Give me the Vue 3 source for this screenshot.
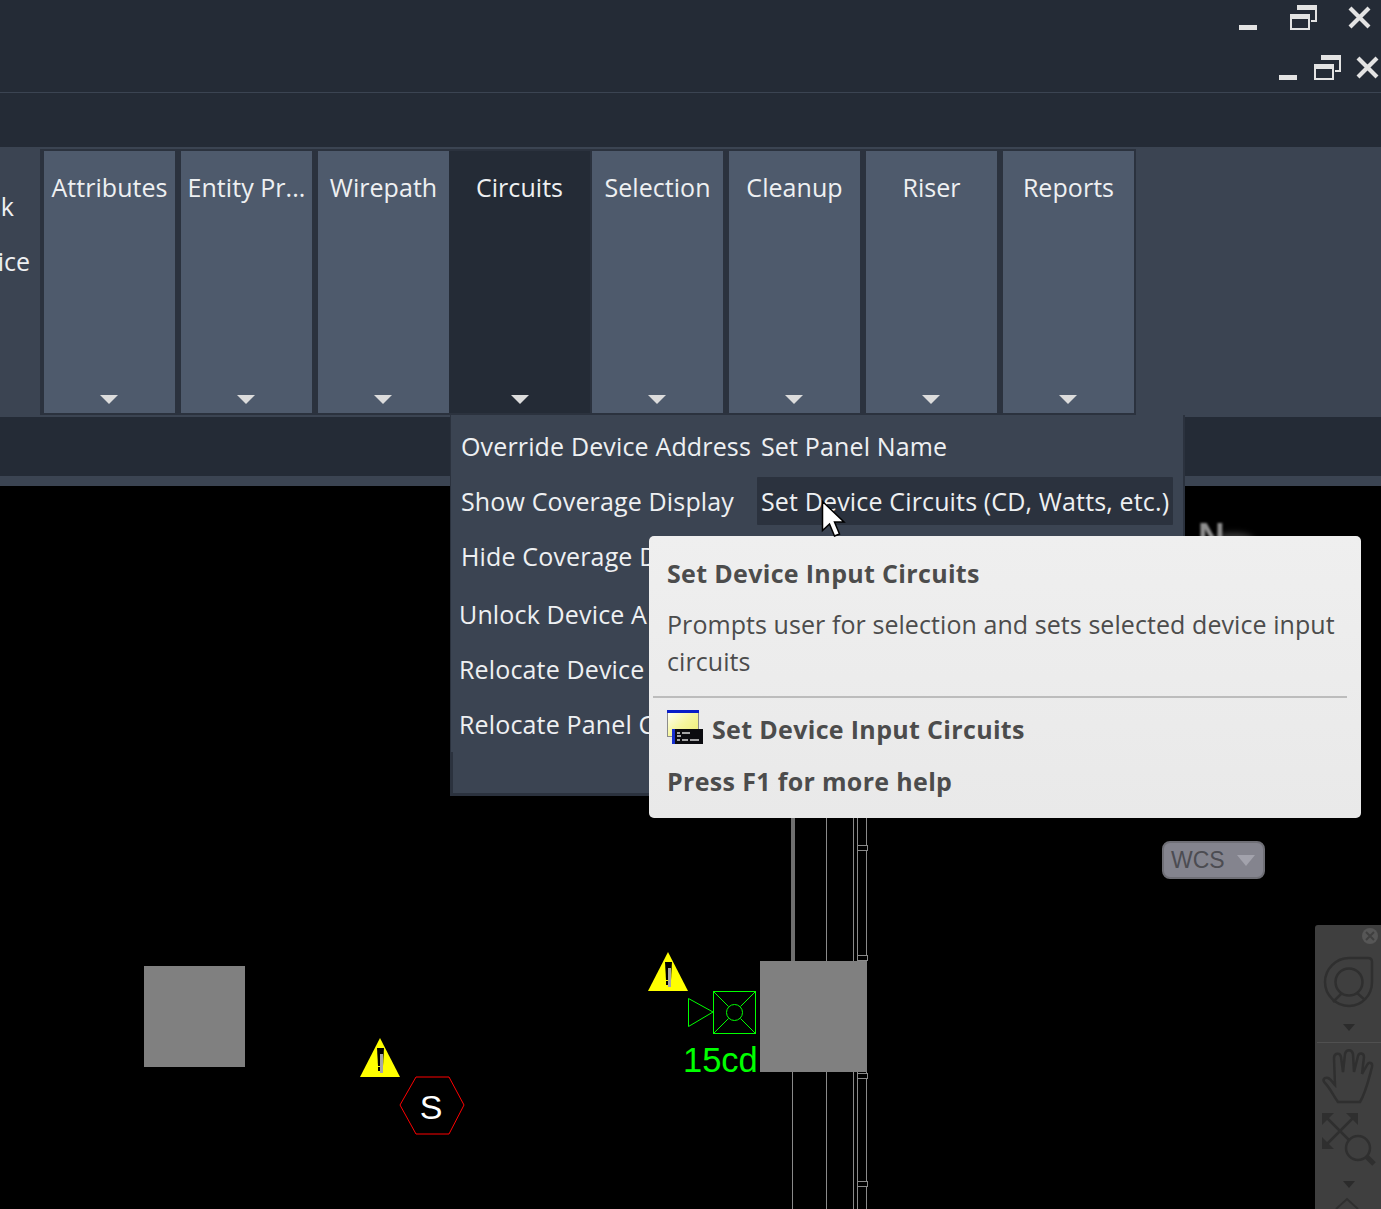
<script setup>
const panels = [
  { label: 'Attributes' },
  { label: 'Entity Pr...' },
  { label: 'Wirepath' },
  { label: 'Circuits', active: true },
  { label: 'Selection' },
  { label: 'Cleanup' },
  { label: 'Riser' },
  { label: 'Reports' }
]
const menuRows = [
  { left: 'Override Device Address', right: 'Set Panel Name' },
  { left: 'Show Coverage Display', right: 'Set Device Circuits (CD, Watts, etc.)', hover: true },
  { left: 'Hide Coverage D', right: '' },
  { left: 'Unlock Device A', right: '', shift: true, gap: true },
  { left: 'Relocate Device', right: '', shift: true },
  { left: 'Relocate Panel C', right: '', shift: true }
]
const warnings = [
  { x: 0, y: 0 },
  { x: 288, y: -86 }
]
const stubs = [845, 955, 1073, 1181]
</script>

<template>
  <div class="screen">
    <header class="titlebar">
      <div class="controls controls-a">
        <svg class="ic-min" width="18" height="5"><rect width="18" height="5" fill="#e3e3e3" /></svg>
        <svg class="ic-restore" width="27" height="25" viewBox="0 0 27 25">
          <path d="M7 1h19v15h-5" fill="none" stroke="#e3e3e3" stroke-width="2" />
          <rect x="7" y="0" width="20" height="5" fill="#e3e3e3" />
          <rect x="1" y="10" width="18" height="14" fill="#242b36" stroke="#e3e3e3" stroke-width="2" />
          <rect x="0" y="9" width="20" height="5" fill="#e3e3e3" />
        </svg>
        <svg class="ic-close" width="23" height="23" viewBox="0 0 23 23">
          <path d="M2 2l19 19M21 2L2 21" stroke="#e3e3e3" stroke-width="4.2" fill="none" />
        </svg>
      </div>
      <div class="controls controls-b">
        <svg class="ic-min" width="18" height="5"><rect width="18" height="5" fill="#e3e3e3" /></svg>
        <svg class="ic-restore" width="27" height="25" viewBox="0 0 27 25">
          <path d="M7 1h19v15h-5" fill="none" stroke="#e3e3e3" stroke-width="2" />
          <rect x="7" y="0" width="20" height="5" fill="#e3e3e3" />
          <rect x="1" y="10" width="18" height="14" fill="#242b36" stroke="#e3e3e3" stroke-width="2" />
          <rect x="0" y="9" width="20" height="5" fill="#e3e3e3" />
        </svg>
        <svg class="ic-close" width="23" height="23" viewBox="0 0 23 23">
          <path d="M2 2l19 19M21 2L2 21" stroke="#e3e3e3" stroke-width="4.2" fill="none" />
        </svg>
      </div>
    </header>
    <div class="tabstrip"></div>

    <section class="ribbon">
      <div class="stub-col">
        <span class="stub-k">k</span>
        <span class="stub-ice">ice</span>
      </div>
      <div class="panels">
        <button v-for="p in panels" :key="p.label" class="panel" :class="{ active: p.active }">
          <span class="panel-label">{{ p.label }}</span>
          <span class="caret"></span>
        </button>
      </div>
    </section>
    <div class="darkstrip"></div>
    <div class="midstrip"></div>

    <main class="canvas">
      <svg class="drawing" width="1381" height="723" viewBox="0 486 1381 723">
        <ellipse cx="1234" cy="541" rx="20" ry="8" class="north-glow" />
        <text x="1198" y="549" class="north">N</text>
        <g shape-rendering="crispEdges">
          <rect x="144" y="966" width="101" height="101" fill="#808080" />
          <rect x="791" y="800" width="4" height="161" fill="#6f6f6f" />
          <rect x="792" y="1072" width="1" height="137" fill="#8a8a8a" />
          <rect x="826" y="800" width="1" height="409" fill="#8a8a8a" />
          <rect x="853" y="800" width="1" height="409" fill="#8a8a8a" />
          <rect x="857" y="800" width="1" height="409" fill="#8a8a8a" />
          <rect x="866" y="800" width="1" height="409" fill="#8a8a8a" />
          <rect v-for="s in stubs" :key="s" x="857.5" :y="s + 0.5" width="10" height="5" fill="#000" stroke="#8a8a8a" />
          <rect x="760" y="961" width="107" height="111" fill="#808080" />
        </g>

        <g v-for="(w, i) in warnings" :key="i" :transform="`translate(${w.x} ${w.y})`">
          <polygon points="380,1038 400,1077 360,1077" fill="#ffff00" />
          <polygon points="377,1048 384,1048 383,1066 378,1066" fill="#000" />
          <rect x="380" y="1054" width="3" height="19" fill="#a6a6a6" />
          <rect x="378" y="1067" width="2" height="4" fill="#000" />
        </g>

        <polygon points="400,1105 416,1077 449,1077 464,1105 449,1134 416,1134" fill="none" stroke="#ff0000" stroke-width="1" />
        <text x="431" y="1119" class="s-mark" text-anchor="middle">S</text>

        <g fill="none" stroke="#00ff00" stroke-width="1">
          <rect x="713.500" y="991.500" width="42" height="42" />
          <circle cx="734.500" cy="1012.500" r="8" />
          <path d="M714 992l14.500 14.500M755 992l-14.500 14.500M714 1033l14.500-14.500M755 1033l-14.500-14.500" />
          <path d="M713 1012l-24.500-13.500v28z" />
        </g>
        <text x="683" y="1072" class="cd-label">15cd</text>
      </svg>

      <div class="wcs">
        <span>WCS</span>
        <i class="wcs-caret"></i>
      </div>

      <aside class="navbar">
        <svg class="nav-close" width="18" height="18" viewBox="0 0 18 18">
          <circle cx="9" cy="9" r="8" fill="#565656" />
          <path d="M5 5l8 8M13 5l-8 8" stroke="#3f3f3f" stroke-width="2" />
        </svg>
        <svg class="nav-wheel" width="50" height="52" viewBox="0 0 50 52" fill="none" stroke="#2f2f2f" stroke-width="2.500">
          <path d="M25 2H44Q48 2 48 6V26C48 39 38 50 25 50C12 50 1 39 1 26C1 13 12 2 25 2Z" />
          <circle cx="25" cy="26" r="13.500" />
          <path d="M18 37L9 46M33 37L41 44" />
        </svg>
        <i class="nav-caret"></i>
        <div class="nav-sep"></div>
        <svg class="nav-hand" width="52" height="54" viewBox="0 0 52 54" fill="none" stroke="#2f2f2f" stroke-width="2.500">
          <path d="M16 52C11 45 8 38 3 33C0 30 2 27 6 28C9 29 11 33 13 35L12 8C12 3 18 2 19 7L21 22L23 4C24 -1 30 -1 31 4L32 22L36 6C37 2 42 3 42 7L40 24L45 15C47 11 51 13 50 17C47 28 44 42 38 52Z" />
        </svg>
        <svg class="nav-zoom" width="58" height="56" viewBox="0 0 58 56" fill="none" stroke="#2f2f2f">
          <path d="M4 4L34 34M34 4L4 34" stroke-width="2.500" />
          <path d="M1 1h12L1 13zM37 1H25l12 12zM1 37h12L1 25z" fill="#2f2f2f" stroke="none" />
          <circle cx="37" cy="36" r="12" stroke-width="2.500" fill="#3f3f3f" />
          <path d="M46 45l7 7" stroke-width="5" />
        </svg>
        <i class="nav-caret nav-caret-low"></i>
        <svg class="nav-diamond" width="30" height="10" viewBox="0 0 30 10" fill="none" stroke="#2f2f2f" stroke-width="2">
          <path d="M3 11L14 1l11 10" />
        </svg>
      </aside>
    </main>

    <nav class="menu">
      <div v-for="r in menuRows" :key="r.left" class="menu-row" :class="{ gap: r.gap }">
        <span class="menu-left" :class="{ shift: r.shift }">{{ r.left }}</span>
        <span v-if="r.right" class="menu-right" :class="{ hover: r.hover }">{{ r.right }}</span>
      </div>
    </nav>

    <svg class="cursor" width="26" height="38" viewBox="0 0 26 38">
      <path d="M1.500 1.500v29l7-6.500 5 12 5-2-5-12h9.500z" fill="#fff" stroke="#000" stroke-width="1.500" />
    </svg>

    <div class="tooltip">
      <h3 class="tip-title">Set Device Input Circuits</h3>
      <p class="tip-desc">Prompts user for selection and sets selected device input circuits</p>
      <hr class="tip-sep" />
      <div class="tip-cmd">
        <svg class="tip-icon" width="36" height="35" viewBox="0 0 36 35">
          <defs>
            <linearGradient id="winfill" x1="0" y1="0" x2="1" y2="1">
              <stop offset="0" stop-color="#ffffff" />
              <stop offset="0.5" stop-color="#f6f6a0" />
              <stop offset="1" stop-color="#eeee70" />
            </linearGradient>
          </defs>
          <rect x="0.500" y="0.500" width="31" height="26" fill="url(#winfill)" stroke="#8c8c8c" />
          <rect x="0" y="0" width="32" height="3" fill="#0a1ec8" />
          <rect x="5" y="19" width="31" height="15" fill="#0c0c10" />
          <rect x="5" y="19" width="3" height="15" fill="#1830d0" />
          <path d="M10 23h3M15 23h8M10 26h4M10 30h3M15 30h6M23 30h9" stroke="#d8d8d8" stroke-width="1.500" />
        </svg>
        <span class="tip-cmd-name">Set Device Input Circuits</span>
      </div>
      <p class="tip-help">Press F1 for more help</p>
    </div>
  </div>
</template>

<style scoped>
.screen {
  position: relative;
  width: 1381px;
  height: 1209px;
  overflow: hidden;
  display: flex;
  flex-direction: column;
  background: #000;
  font-family: "Open Sans", "Noto Sans", sans-serif;
  color: #eef0f2;
}
.titlebar {
  height: 92px;
  background: #242b36;
  border-bottom: 1px solid #3b4452;
  display: flex;
  flex-direction: column;
  box-sizing: content-box;
}
.controls {
  display: flex;
  justify-content: flex-end;
  align-items: flex-end;
}
.controls svg { display: block; }
.controls-a {
  height: 30px;
  padding-right: 10px;
  gap: 33px;
}
.controls-a .ic-close { margin: 0 0 1px -2px; }
.controls-b {
  height: 50px;
  padding-right: 2px;
  gap: 17px;
}
.controls-b .ic-close { margin: 0 0 1px -2px; }
.tabstrip {
  height: 54px;
  background: #242b36;
}
.ribbon {
  height: 270px;
  background: #3b4452;
  display: flex;
  align-items: flex-start;
}
.stub-col {
  width: 40px;
  flex: none;
  font-size: 25px;
  display: flex;
  flex-direction: column;
  align-items: flex-end;
  padding-top: 42px;
  gap: 21px;
  line-height: 34px;
}
.stub-k { margin-right: 26px; }
.stub-ice { margin-right: 10px; }
.panels {
  margin-top: 2px;
  height: 266px;
  box-sizing: border-box;
  padding: 2px 2px 2px 4px;
  background: #2b323e;
  display: flex;
  gap: 6px;
}
.panel {
  width: 131px;
  flex: none;
  position: relative;
  padding: 0;
  border: 0;
  background: #4e5a6c;
  color: inherit;
  font: inherit;
  font-size: 25px;
  letter-spacing: 0.05px;
  display: flex;
  flex-direction: column;
  align-items: center;
  justify-content: space-between;
}
.panel.active {
  background: #242b36;
  width: 141px;
  margin: 0 -4px 0 -6px;
}
.panel-label {
  margin-top: 19px;
  line-height: 34px;
  white-space: nowrap;
}
.caret {
  width: 0;
  height: 0;
  margin: 0 2px 9px 0;
  border-left: 9px solid transparent;
  border-right: 9px solid transparent;
  border-top: 9px solid #dcdcdc;
}
.panel.active .caret { margin-right: 0; }
.darkstrip {
  height: 59px;
  background: #242b36;
}
.midstrip {
  height: 10px;
  background: #3b4452;
}
.canvas {
  position: relative;
  flex: 1;
  background: #000;
}
.drawing {
  position: absolute;
  inset: 0;
  display: block;
}
.north {
  font: bold 37px "Liberation Sans", sans-serif;
  fill: #8e8e8e;
  filter: blur(1.2px);
}
.north-glow {
  fill: #3c3c3c;
  filter: blur(3px);
}
.s-mark {
  font: 34px "Liberation Sans", sans-serif;
  fill: #fff;
}
.cd-label {
  font: 34.500px "Liberation Sans", sans-serif;
  fill: #00ff00;
}
.wcs {
  position: absolute;
  left: 1162px;
  top: 355px;
  width: 103px;
  height: 38px;
  box-sizing: border-box;
  border: 2px solid #6f6f76;
  border-radius: 8px;
  background: #84848e;
  display: flex;
  align-items: center;
  padding-left: 7px;
  gap: 12px;
  font: 23px "Liberation Sans", sans-serif;
  color: #4c4c52;
}
.wcs-caret {
  width: 0;
  height: 0;
  border-left: 9px solid transparent;
  border-right: 9px solid transparent;
  border-top: 11px solid #a2a2ac;
}
.navbar {
  position: absolute;
  left: 1315px;
  top: 439px;
  width: 66px;
  height: 284px;
  background: #3f3f3f;
  border-radius: 3px 0 0 0;
  display: flex;
  flex-direction: column;
  align-items: flex-start;
}
.navbar svg { display: block; flex: none; overflow: visible; }
.nav-close { position: absolute; left: 46px; top: 2px; }
.nav-wheel { margin: 31px 0 0 9px; }
.nav-caret {
  flex: none;
  width: 0;
  height: 0;
  margin: 16px 0 0 28px;
  border-left: 6px solid transparent;
  border-right: 6px solid transparent;
  border-top: 7px solid #2b2b2b;
}
.nav-sep {
  flex: none;
  width: 100%;
  height: 1px;
  margin-top: 11px;
  margin-left: 2px;
  background: #505050;
}
.nav-hand { margin: 7px 0 0 7px; }
.nav-zoom { margin: 8px 0 0 6px; }
.nav-caret-low { margin-top: 13px; }
.nav-diamond { margin: 10px 0 0 18px; }

.menu {
  position: absolute;
  left: 450px;
  top: 415px;
  width: 735px;
  height: 381px;
  box-sizing: border-box;
  background: #3b4452;
  border-left: 1px solid #2b323e;
  border-right: 2px solid #2b323e;
  border-bottom: 3px solid #2b323e;
  padding: 3px 0 0 10px;
  font-size: 25px;
  letter-spacing: 0.15px;
}
.menu::before {
  content: "";
  position: absolute;
  left: 0;
  top: 337px;
  bottom: 0;
  width: 2px;
  background: #2b323e;
}
.menu-row {
  display: flex;
  height: 55px;
  align-items: center;
  white-space: nowrap;
}
.menu-row.gap { margin-top: 3px; }
.menu-left {
  width: 296px;
  flex: none;
}
.menu-left.shift { margin-left: -2px; }
.menu-right {
  padding: 0 4px;
  line-height: 48px;
}
.menu-right.hover {
  background: #2b323e;
  border-radius: 1px;
}
.cursor {
  position: absolute;
  left: 821px;
  top: 500px;
  z-index: 3;
}
.tooltip {
  position: absolute;
  z-index: 2;
  left: 649px;
  top: 536px;
  width: 712px;
  height: 282px;
  box-sizing: border-box;
  border-radius: 5px;
  background: linear-gradient(#efefef, #e9e9e9);
  padding: 18px 4px 0;
  color: #4c4c4c;
  font-size: 25px;
}
.tip-title,
.tip-help,
.tip-cmd-name {
  font-weight: 700;
  line-height: 38px;
  margin: 0;
  font-size: 25px;
  letter-spacing: 0.33px;
}
.tip-title { padding-left: 14px; }
.tip-desc {
  margin: 14px 0 0;
  padding: 0 14px;
  line-height: 37px;
  font-weight: 400;
  letter-spacing: 0.07px;
}
.tip-sep {
  margin: 16px 10px 0 0;
  border: 0;
  height: 2px;
  background: #bcbcbc;
}
.tip-cmd {
  display: flex;
  align-items: flex-start;
  gap: 9px;
  margin-top: 12px;
  padding-left: 14px;
}
.tip-icon { display: block; flex: none; }
.tip-cmd-name { margin-top: 0; }
.tip-help {
  margin-top: 14px;
  padding-left: 14px;
}
</style>

<style>
html, body { margin: 0; background: #000; }
</style>
